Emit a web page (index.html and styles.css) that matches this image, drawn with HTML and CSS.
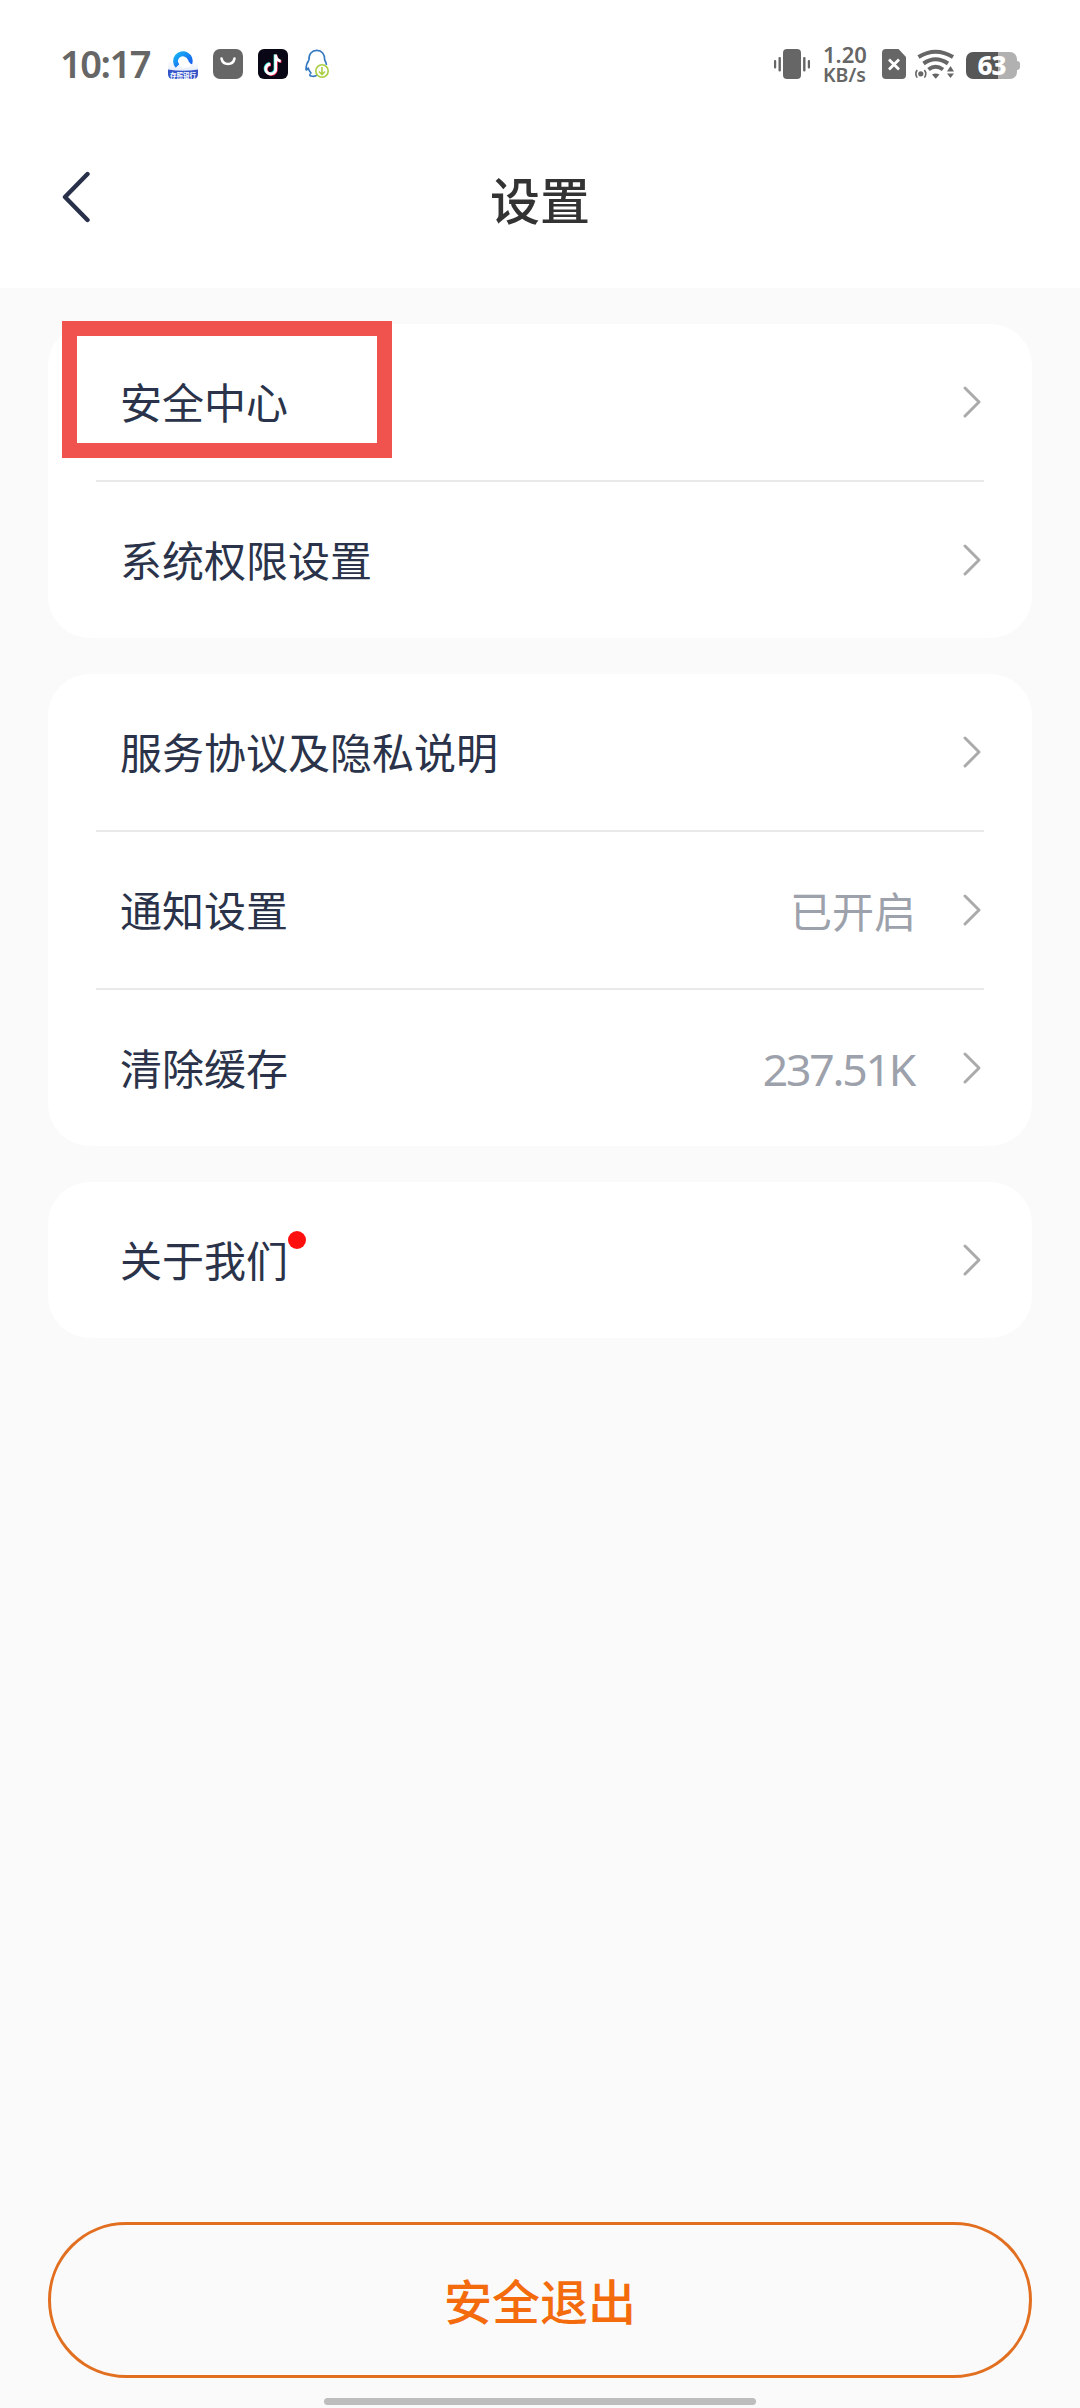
FILE: index.html
```html
<!DOCTYPE html>
<html lang="zh-CN">
<head>
<meta charset="utf-8">
<title>设置</title>
<link rel="stylesheet" href="styles.css">
</head>
<body>
<div class="screen">
  <div class="status">
    <div class="status-left">
      <span class="clock">10:17</span>
      <svg class="app" viewBox="0 0 30 30">
        <defs>
          <linearGradient id="ring" x1="0" y1="0" x2="1" y2="1"><stop offset="0" stop-color="#18b0f6"/><stop offset="1" stop-color="#1458ee"/></linearGradient>
          <linearGradient id="haze" x1="0" y1="0" x2="0" y2="1"><stop offset="0" stop-color="#fff"/><stop offset="1" stop-color="#dfe9fa"/></linearGradient>
        </defs>
        <rect y="12" width="30" height="12" fill="url(#haze)"/>
        <path d="M9.500 17A7.300 7.300 0 1 1 21.800 14.500" fill="none" stroke="url(#ring)" stroke-width="5"/>
        <circle cx="16" cy="14" r="5" fill="#fff"/><circle cx="20" cy="15.500" r="2.500" fill="#fff"/>
        <path d="M0 20.500Q15 23 30 20.500V25Q30 30 25 30H5Q0 30 0 25Z" fill="#3454c8"/>
        <text x="15" y="28.500" text-anchor="middle" class="app-label">存照银行</text>
      </svg>
      <svg class="app" viewBox="0 0 30 30">
        <rect width="30" height="30" rx="7" fill="#666"/>
        <path d="M8.500 9.500C10 16.800 20 16.800 21.500 9.500" fill="none" stroke="#fff" stroke-width="2.600" stroke-linecap="round"/>
      </svg>
      <svg class="app" viewBox="0 0 30 30">
        <rect width="30" height="30" rx="6" fill="#090716"/>
        <g fill="none" stroke-width="2.800">
          <path d="M17 5.500V18.500A5 5 0 1 1 11.500 14.500M17 6.500Q18 11 22 11.500" stroke="#35e5e2"/>
          <path d="M18.400 6.500V19.800A5 5 0 1 1 13 15.500M18.400 7.500Q19.500 12.200 23.500 12.700" stroke="#f32855"/>
          <path d="M17.700 5.500V19.200A5 5 0 1 1 12.300 15M17.700 7Q18.700 11.600 22.700 12.100" stroke="#fff"/>
        </g>
      </svg>
      <svg class="app" viewBox="0 0 30 30">
        <path d="M6 11C5.500 5 9 1.400 13.800 1.400S22 5 21.700 11Q23 13 23.500 16M6 11Q3 15 3 20.500Q3.500 22 5.200 19Q6 22 8 24Q5.500 26.500 8 27Q12 28 14 26" fill="none" stroke="#3478c0" stroke-width="1.600" stroke-linejoin="round"/>
        <circle cx="19" cy="22" r="6.200" fill="#fff" stroke="#a9ce42" stroke-width="1.600"/>
        <path d="M19 18V25.300M16 22.500L19 25.500L22 22.500" fill="none" stroke="#a9ce42" stroke-width="1.600"/>
      </svg>
    </div>
    <div class="status-right">
      <svg class="vibrate" viewBox="0 0 36 30" fill="#666">
        <rect x="9" width="18" height="30" rx="4"/>
        <rect x="4.500" y="8" width="2.400" height="14.500" rx="1"/><rect y="11" width="2.200" height="8.500" rx="1"/>
        <rect x="29.100" y="8" width="2.400" height="14.500" rx="1"/><rect x="33.800" y="11" width="2.200" height="8.500" rx="1"/>
      </svg>
      <div class="speed">1.20<br><span class="unit">KB/s</span></div>
      <svg class="sim" viewBox="0 0 24 30">
        <path d="M4 0H16.500L24 8V26Q24 30 20 30H4Q0 30 0 26V4Q0 0 4 0Z" fill="#666"/>
        <path d="M7 10.500L17 20.500M17 10.500L7 20.500" stroke="#fff" stroke-width="2.800"/>
      </svg>
      <svg class="wifi" viewBox="0 0 40 30">
        <g fill="none" stroke="#666" stroke-width="4">
          <path d="M3.500 8Q20.500 -2.500 38 8"/>
          <path d="M8.500 14.500Q20.500 6 33 14.500"/>
          <path d="M13.500 20.500Q20.500 15 28 20.500"/>
        </g>
        <path d="M17 25.500Q20.500 23.500 24.500 25.500L21 29.500H20.500Z" fill="#666"/>
        <circle cx="5.800" cy="24.800" r="2.600" fill="#666"/>
        <path d="M2.200 21Q-.500 24.800 2.200 28.600M9.400 21Q12.200 24.800 9.400 28.600" fill="none" stroke="#666" stroke-width="1.600"/>
        <path d="M32 22.500L35.500 17L39 22.500ZM32 24.500L35.500 29L39 24.500Z" fill="#666"/>
      </svg>
      <div class="battery"><span class="cell">63</span><span class="nub"></span></div>
    </div>
  </div>

  <header class="nav">
    <svg class="back" viewBox="0 0 28 52"><path d="M25.500 3L3 26L25.500 49" fill="none" stroke="#28304a" stroke-width="4.400" stroke-linecap="round" stroke-linejoin="round"/></svg>
    <h1 class="title">设置</h1>
  </header>

  <main class="content">
    <section class="card">
      <div class="row"><span class="label">安全中心</span><svg class="chev" viewBox="0 0 18 32"><path d="M2 2L16 16L2 30"/></svg><span class="marker"></span></div>
      <div class="row"><span class="label">系统权限设置</span><svg class="chev" viewBox="0 0 18 32"><path d="M2 2L16 16L2 30"/></svg></div>
    </section>
    <section class="card">
      <div class="row"><span class="label">服务协议及隐私说明</span><svg class="chev" viewBox="0 0 18 32"><path d="M2 2L16 16L2 30"/></svg></div>
      <div class="row"><span class="label">通知设置</span><span class="value">已开启</span><svg class="chev" viewBox="0 0 18 32"><path d="M2 2L16 16L2 30"/></svg></div>
      <div class="row"><span class="label">清除缓存</span><span class="value number">237.51K</span><svg class="chev" viewBox="0 0 18 32"><path d="M2 2L16 16L2 30"/></svg></div>
    </section>
    <section class="card">
      <div class="row"><span class="label">关于我们<i class="dot"></i></span><svg class="chev" viewBox="0 0 18 32"><path d="M2 2L16 16L2 30"/></svg></div>
    </section>
  </main>

  <footer class="footer">
    <button class="logout">安全退出</button>
    <div class="home"></div>
  </footer>
</div>
</body>
</html>
```
FILE: styles.css
```css
* { box-sizing: border-box; }
body { margin: 0; background: #fafafa; font-family: "Noto Sans CJK SC", sans-serif; }
svg { display: block; flex: none; }

.screen { width: 1080px; height: 2408px; display: flex; flex-direction: column; }

.status {
  height: 128px; flex: none; padding: 0 60px 0 60px; background: #fff; color: #666;
  display: flex; justify-content: space-between; font-family: "Noto Sans", sans-serif;
}
.status-left, .status-right { height: 128px; display: flex; align-items: center; }
.status-left { gap: 15px; }
.clock { width: 93px; font-size: 38px; font-weight: 600; line-height: 52px; padding-bottom: 2px; letter-spacing: -1.5px; white-space: nowrap; }
.app { width: 30px; height: 30px; }
.app-label { font: bold 6.500px "Noto Sans CJK SC", sans-serif; fill: #fff; }
.vibrate { width: 36px; height: 30px; margin-right: 13px; }
.speed { width: 45px; font-size: 22px; line-height: 19px; font-weight: 600; white-space: nowrap; }
.unit { font-size: 19.500px; }
.sim { width: 24px; height: 30px; margin-left: 14px; }
.wifi { width: 40px; height: 30px; margin-left: 9px; }
.battery { margin: 3px 0 0 11px; display: flex; align-items: center; }
.cell {
  width: 51px; height: 27px; border-radius: 7px; color: #fff;
  background: linear-gradient(90deg, #575757 32px, #b1b1b1 32px);
  font-size: 26px; line-height: 27px; font-weight: 800; text-align: center; letter-spacing: -1px;
}
.nub { width: 3px; height: 9px; border-radius: 0 3px 3px 0; background: #b1b1b1; }

.nav {
  height: 160px; flex: none; padding: 0 62px; background: #fff;
  display: grid; grid-template-columns: 28px 1fr 28px;
}
.back { width: 28px; height: 52px; margin-top: 43px; }
.title { margin: 34px 0 0; font-size: 50px; line-height: 72px; font-weight: 500; color: #333; text-align: center; }

.content { flex: 1; padding: 36px 48px 0; display: flex; flex-direction: column; gap: 36px; }
.card { background: #fff; border-radius: 42px; padding: 0 48px; }
.row { position: relative; height: 156px; padding: 0 3px 0 24px; display: flex; align-items: center; }
.row + .row { height: 158px; border-top: 2px solid #e9e9e9; }
.label { position: relative; margin-bottom: 2px; font-size: 42px; line-height: 60px; color: #2a3349; }
.value { margin-left: auto; margin-right: 47px; font-size: 42px; line-height: 60px; color: #9ca1ab; }
.number { margin-top: 2px; margin-right: 49px; font-family: "Noto Sans", sans-serif; font-size: 44.500px; letter-spacing: -2.200px; }
.chev { width: 18px; height: 32px; fill: none; stroke: #aaa; stroke-width: 2.900; stroke-linecap: round; stroke-linejoin: round; }
.label + .chev { margin-left: auto; }
.dot { position: absolute; left: 168px; top: 2px; width: 18px; height: 18px; border-radius: 50%; background: #ff100e; }
.marker { position: absolute; left: -34px; top: -3px; width: 330px; height: 137px; border: 15px solid #f0524d; }

.footer { padding: 0 48px 3px; display: flex; flex-direction: column; align-items: center; gap: 20px; }
.logout {
  width: 984px; height: 156px; padding: 0 0 3px; border: 3px solid #e26f20; border-radius: 78px; background: transparent;
  font-family: inherit; font-size: 48px; line-height: 68px; font-weight: 500; color: #f36b0c;
}
.home { width: 432px; height: 7px; border-radius: 4px; background: #bdbdbd; }
```
